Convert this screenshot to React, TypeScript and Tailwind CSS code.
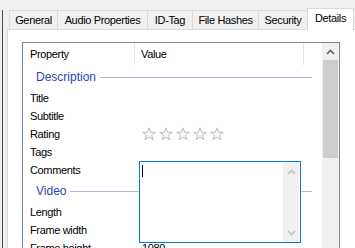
import React from "react";

function Chevron({ up, color }: { up: boolean; color: string }) {
  return (
    <svg width="9" height="6" viewBox="0 0 9 6">
      <path
        d={up ? "M1 5 L4.5 1.5 L8 5" : "M1 1 L4.5 4.5 L8 1"}
        fill="none"
        stroke={color}
        strokeWidth="1.6"
      />
    </svg>
  );
}

function Star() {
  return (
    <svg width="14" height="14" viewBox="0 0 14 14">
      <polygon
        points="7,0.8 8.59,5.22 13.28,5.36 9.57,8.23 10.88,12.74 7,10.1 3.12,12.74 4.43,8.23 0.72,5.36 5.41,5.22"
        fill="#f8f8f8"
        stroke="#bcbcbc"
        strokeWidth="1"
        strokeLinejoin="round"
      />
    </svg>
  );
}

function Row({ name, children }: { name: string; children?: React.ReactNode }) {
  return (
    <div className="flex h-[18px] items-center">
      <div className="w-[112px] pl-[7px] whitespace-nowrap">{name}</div>
      <div className="flex-1 pl-[7px] flex items-center">{children}</div>
    </div>
  );
}

function Group({ name }: { name: string }) {
  return (
    <div className="flex h-[24px] items-center pl-[13px]">
      <span className="text-[12px] tracking-normal text-[#2b45b5]">{name}</span>
      <div className="flex-1 h-px bg-[#b0b9d9] ml-[4px] mr-[10px]" />
    </div>
  );
}

const tabs = [
  { label: "General", w: "w-[49px]" },
  { label: "Audio Properties", w: "w-[91px]" },
  { label: "ID-Tag", w: "w-[46px]" },
  { label: "File Hashes", w: "w-[67px]" },
  { label: "Security", w: "w-[50px]" },
];

export default function App() {
  return (
    <div className="w-[355px] h-[248px] overflow-hidden bg-[#f0f0f0] flex font-['Liberation_Sans',Arial,sans-serif] text-[11px] tracking-[-0.35px] text-black leading-none">
      <div className="w-[2px] shrink-0" />
      <div className="w-px shrink-0 mt-[10px] bg-[#4d4d4d]" />
      <div className="w-[4px] shrink-0" />
      <div className="flex-1 flex flex-col min-w-0">
        {/* tab strip */}
        <div className="h-[29px] flex items-end pl-[2px] shrink-0">
          {tabs.map((t, i) => (
            <div
              key={t.label}
              className={`${t.w} h-[19px] pt-[4px] text-center whitespace-nowrap border border-b-0 border-[#d9d9d9] bg-[#f0f0f0] ${
                i === 0 ? "" : "-ml-px"
              }`}
            >
              {t.label}
            </div>
          ))}
          <div className="w-[47px] h-[22px] -ml-px -mb-px relative z-10 pt-[4px] text-center whitespace-nowrap border border-b-0 border-[#d9d9d9] bg-white">
            Details
          </div>
        </div>
        {/* panel */}
        <div className="h-[400px] shrink-0 bg-white border-l border-t border-[#d9d9d9] pl-[14px] pt-[12px]">
          <div className="relative w-[318px] h-[330px] border border-[#828790] flex">
            <div className="flex-1 flex flex-col">
              {/* header */}
              <div className="flex h-[22px] items-center">
                <div className="w-[111px] pl-[7px]">Property</div>
                <div className="w-px self-stretch bg-[#e5e5e5]" />
                <div className="w-[168px] pl-[6px]">Value</div>
                <div className="w-px self-stretch bg-[#e5e5e5]" />
              </div>
              <Group name="Description" />
              <Row name="Title" />
              <Row name="Subtitle" />
              <Row name="Rating">
                <div className="flex gap-[3px]">
                  <Star />
                  <Star />
                  <Star />
                  <Star />
                  <Star />
                </div>
              </Row>
              <Row name="Tags" />
              <Row name="Comments" />
              <Group name="Video" />
              <Row name="Length" />
              <Row name="Frame width" />
              <Row name="Frame height">1080</Row>
            </div>
            {/* list scrollbar */}
            <div className="w-[17px] bg-[#f0f0f0] flex flex-col items-center">
              <div className="h-[17px] w-full flex items-center justify-center">
                <Chevron up color="#606060" />
              </div>
              <div className="w-[15px] h-[98px] bg-[#cdcdcd]" />
            </div>
            {/* comments editor overlay */}
            <div className="absolute left-[116px] top-[118px] w-[162px] h-[82px] border border-[#0078d7] bg-white p-px flex">
              <div className="flex-1">
                <div className="ml-px mt-[2px] w-px h-[12px] bg-black" />
              </div>
              <div className="w-[16px] bg-[#f0f0f0] flex flex-col justify-between">
                <div className="h-[17px] flex items-center justify-center">
                  <Chevron up color="#c2c2c2" />
                </div>
                <div className="h-[17px] flex items-center justify-center">
                  <Chevron up={false} color="#c2c2c2" />
                </div>
              </div>
            </div>
          </div>
        </div>
      </div>
    </div>
  );
}
